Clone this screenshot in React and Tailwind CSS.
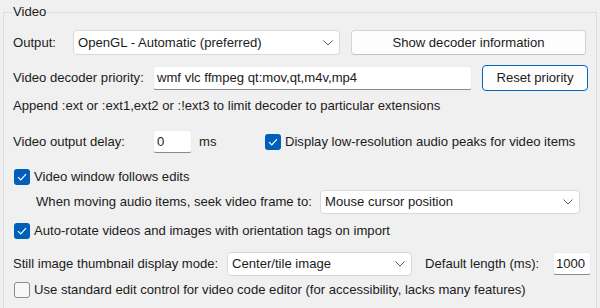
import React from 'react'

const Chevron = () => (
  <svg width="10" height="6" viewBox="0 0 10 6" fill="none" className="shrink-0">
    <path d="M0.5 0.5 L5 5 L9.5 0.5" stroke="#5f5f5f" strokeWidth="1" />
  </svg>
)

const Combo = ({ value, className }) => (
  <div
    className={`flex items-center justify-between bg-white border border-[#d9d9d9] rounded-[4px] pl-[4px] pr-[6px] ${className}`}
  >
    <span className="truncate">{value}</span>
    <Chevron />
  </div>
)

const Button = ({ label, className, isDefault }) => (
  <div
    className={`flex items-center justify-center bg-[#fdfdfd] rounded-[4px] border ${
      isDefault ? 'border-[#0067c0]' : 'border-[#d5d5d5] border-b-[#c2c2c2]'
    } ${className}`}
  >
    {label}
  </div>
)

const TextInput = ({ value, className }) => (
  <div
    className={`flex items-center bg-white border border-[#ececec] border-b-[#8a8a8a] rounded-[3px] ${className}`}
  >
    {value}
  </div>
)

const Check = ({ checked }) =>
  checked ? (
    <div className="w-[16px] h-[16px] rounded-[3px] bg-[#005fb8] flex items-center justify-center shrink-0">
      <svg width="10" height="8" viewBox="0 0 10 8" fill="none">
        <path d="M1 4.2 L3.8 7 L9 1.2" stroke="white" strokeWidth="1.2" />
      </svg>
    </div>
  ) : (
    <div className="w-[16px] h-[16px] rounded-[3px] border border-[#8a8a8a] bg-[#f7f7f7] shrink-0" />
  )

export default function App() {
  return (
    <div
      className="w-[600px] h-[308px] bg-[#f0f0f0] text-[13.1px] text-[#1b1b1b] overflow-hidden pt-[12px] px-[3px]"
      style={{ fontFamily: '"Liberation Sans", Arial, sans-serif' }}
    >
      <div className="relative border border-[#dcdcdc] h-[320px] pl-[9px] pt-[17px]">
        <span className="absolute left-[8px] top-[-9px] bg-[#f0f0f0] px-[1px] leading-[16px]">Video</span>

        {/* Output */}
        <div className="flex items-center h-[25px]">
          <span className="w-[60px]">Output:</span>
          <Combo value="OpenGL - Automatic (preferred)" className="w-[267px] h-[25px]" />
          <Button label="Show decoder information" className="ml-[11px] w-[235px] h-[25px]" />
        </div>

        {/* Decoder priority */}
        <div className="flex items-center h-[26px] mt-[10px]">
          <span className="w-[140px]">Video decoder priority:</span>
          <TextInput value="wmf vlc ffmpeg qt:mov,qt,m4v,mp4" className="w-[319px] h-[24px] pl-[3px]" />
          <Button label="Reset priority" isDefault className="ml-[10px] w-[106px] h-[26px]" />
        </div>

        <div className="h-[16px] mt-[7px] flex items-center whitespace-nowrap">
          Append :ext or :ext1,ext2 or :!ext3 to limit decoder to particular extensions
        </div>

        {/* Output delay */}
        <div className="flex items-center h-[23px] mt-[16px]">
          <span className="w-[140px]">Video output delay:</span>
          <TextInput value="0" className="w-[39px] h-[23px] pl-[3px]" />
          <span className="ml-[7px] w-[66px]">ms</span>
          <Check checked />
          <span className="ml-[4px] whitespace-nowrap">Display low-resolution audio peaks for video items</span>
        </div>

        <div className="flex items-center h-[16px] mt-[16px] pl-[1px]">
          <Check checked />
          <span className="ml-[4px]">Video window follows edits</span>
        </div>

        <div className="flex items-center h-[24px] mt-[5px] pl-[23px]">
          <span className="w-[284px] whitespace-nowrap">When moving audio items, seek video frame to:</span>
          <Combo value="Mouse cursor position" className="w-[260px] h-[24px]" />
        </div>

        <div className="flex items-center h-[16px] mt-[9px] pl-[1px]">
          <Check checked />
          <span className="ml-[4px] whitespace-nowrap">Auto-rotate videos and images with orientation tags on import</span>
        </div>

        {/* Still image mode */}
        <div className="flex items-center h-[23px] mt-[13px]">
          <span className="w-[214px] whitespace-nowrap">Still image thumbnail display mode:</span>
          <Combo value="Center/tile image" className="w-[185px] h-[24px]" />
          <span className="ml-[13px] w-[128px] whitespace-nowrap">Default length (ms):</span>
          <TextInput value="1000" className="w-[38px] h-[23px] pl-[2px]" />
        </div>

        <div className="flex items-center h-[16px] mt-[7px] pl-[1px]">
          <Check />
          <span className="ml-[4px] whitespace-nowrap">Use standard edit control for video code editor (for accessibility, lacks many features)</span>
        </div>
      </div>
    </div>
  )
}
